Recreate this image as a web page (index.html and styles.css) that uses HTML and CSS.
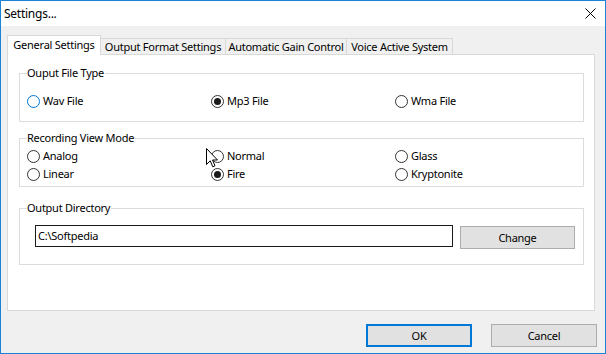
FILE: index.html
```html
<!DOCTYPE html>
<html lang="en">
<head>
  <meta charset="UTF-8">
  <title>Settings...</title>
  <link rel="stylesheet" href="styles.css">
</head>
<body>
  <div class="window">
    <div class="titlebar">
      <span class="title">Settings...</span>
      <svg class="close" width="11" height="11" viewBox="0 0 11 11">
        <path d="M0.5 0.5 L10.5 10.5 M10.5 0.5 L0.5 10.5" stroke="#000" stroke-width="1"/>
      </svg>
    </div>

    <div class="tabs">
      <div class="tab active tab-general">General Settings</div>
      <div class="tab tab-output">Output Format Settings</div>
      <div class="tab tab-gain">Automatic Gain Control</div>
      <div class="tab tab-voice">Voice Active System</div>
    </div>

    <div class="panel">
      <fieldset class="group group-type">
        <legend>Ouput File Type</legend>
        <div class="options">
          <label class="option"><span class="radio focus"></span>Wav File</label>
          <label class="option"><span class="radio checked"></span>Mp3 File</label>
          <label class="option"><span class="radio"></span>Wma File</label>
        </div>
      </fieldset>

      <fieldset class="group group-view">
        <legend>Recording View Mode</legend>
        <div class="options">
          <label class="option"><span class="radio"></span>Analog</label>
          <label class="option"><span class="radio"></span>Normal</label>
          <label class="option"><span class="radio"></span>Glass</label>
          <label class="option"><span class="radio"></span>Linear</label>
          <label class="option"><span class="radio checked"></span>Fire</label>
          <label class="option"><span class="radio"></span>Kryptonite</label>
        </div>
      </fieldset>

      <fieldset class="group group-dir">
        <legend>Output Directory</legend>
        <div class="dir-row">
          <div class="textbox">C:\Softpedia</div>
          <button class="btn btn-change">Change</button>
        </div>
      </fieldset>
    </div>

    <div class="footer">
      <button class="btn btn-ok">OK</button>
      <button class="btn btn-cancel">Cancel</button>
    </div>

    <svg class="cursor" width="13" height="20" viewBox="0 0 13 20">
      <path d="M0.5 0.5 L0.5 16.5 L4.2 12.8 L6.8 18.8 L9 17.8 L6.5 12 L11.5 12 Z" fill="#fff" stroke="#000" stroke-width="1"/>
    </svg>
  </div>
</body>
</html>
```

FILE: styles.css
```css
* {
  box-sizing: border-box;
}

body {
  margin: 0;
  font-family: "Noto Sans", "Liberation Sans", sans-serif;
  font-size: 11px;
  letter-spacing: -0.25px;
  color: #000;
  background-color: #f0f0f0;
}

.window {
  position: relative;
  width: 606px;
  height: 354px;
  border: 1px solid #1883d7;
  background-color: #f0f0f0;
}

.titlebar {
  display: flex;
  align-items: center;
  justify-content: space-between;
  height: 25px;
  padding: 0 9px 0 3px;
  background-color: #fff;
}

.title {
  font-size: 12px;
  line-height: 16px;
}

.tabs {
  display: flex;
  align-items: flex-end;
  margin-top: 9px;
  padding-left: 6px;
  height: 19px;
}

.tab {
  height: 16px;
  line-height: 16px;
  text-align: center;
  border: 1px solid #d9d9d9;
  border-bottom: none;
  border-left: none;
  background-color: #f0f0f0;
  white-space: nowrap;
}

.tab.active {
  position: relative;
  z-index: 1;
  height: 20px;
  margin-bottom: -1px;
  line-height: 18px;
  border-left: 1px solid #d9d9d9;
  background-color: #fff;
}

.tab-general { width: 94px; }
.tab-output { width: 125px; }
.tab-gain { width: 121px; }
.tab-voice { width: 106px; }

.panel {
  width: 588px;
  height: 257px;
  margin-left: 6px;
  padding: 10px 10px 0 11px;
  border: 1px solid #d9d9d9;
  background-color: #fff;
}

.group {
  margin: 0;
  padding: 0 7px;
  border: 1px solid #dcdcdc;
}

.group legend {
  padding: 0 1px 0 0;
  line-height: 16px;
}

.group-type {
  padding-top: 12px;
  padding-bottom: 12px;
}

.group-view {
  margin-top: 8px;
  padding-top: 2px;
  padding-bottom: 4px;
}

.group-dir {
  margin-top: 13px;
  padding-top: 9px;
  padding-bottom: 15px;
}

.options {
  display: grid;
  grid-template-columns: 184px 184px 1fr;
  row-gap: 2px;
}

.option {
  display: flex;
  align-items: center;
  height: 16px;
  line-height: 16px;
}

.radio {
  width: 13px;
  height: 13px;
  margin-right: 3px;
  border: 1px solid #333;
  border-radius: 50%;
  background-color: #fff;
  position: relative;
}

.radio.focus {
  border-color: #0078d7;
}

.radio.checked::after {
  content: "";
  position: absolute;
  left: 2px;
  top: 2px;
  width: 7px;
  height: 7px;
  border-radius: 50%;
  background-color: #1a1a1a;
}

.dir-row {
  display: flex;
  align-items: flex-start;
  padding-left: 8px;
}

.textbox {
  width: 418px;
  height: 22px;
  line-height: 20px;
  padding-left: 2px;
  border: 1px solid #1a1a1a;
  background-color: #fff;
}

.btn {
  height: 23px;
  padding: 0;
  font-family: inherit;
  font-size: 11px;
  letter-spacing: inherit;
  color: #000;
  border: 1px solid #adadad;
  background-color: #e1e1e1;
}

.btn-change {
  width: 115px;
  margin-top: 1px;
  margin-left: 7px;
}

.footer {
  display: flex;
  justify-content: flex-end;
  gap: 19px;
  margin-top: 13px;
  padding-right: 8px;
}

.btn-ok,
.btn-cancel {
  width: 106px;
}

.btn-ok {
  border: 2px solid #0078d7;
}

.cursor {
  position: absolute;
  left: 205px;
  top: 147px;
}
```
